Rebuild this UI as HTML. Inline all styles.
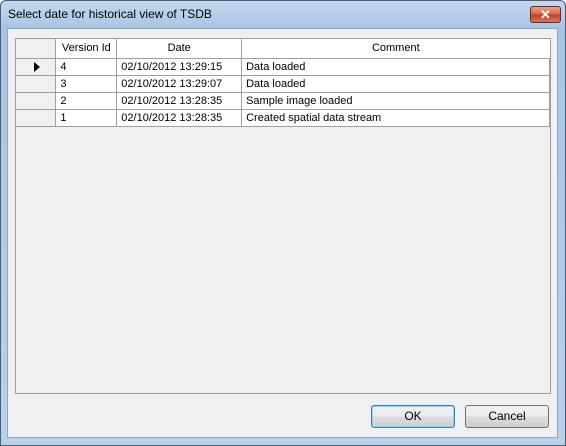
<!DOCTYPE html>
<html><head><style>
*{margin:0;padding:0;box-sizing:border-box}
body{width:566px;height:446px;overflow:hidden;font-family:"Liberation Sans",Tahoma,sans-serif;font-size:11px;background:#fff}
.win{position:absolute;left:0;top:0;width:566px;height:446px;border:1px solid #4a5d72;border-radius:6px 6px 0 0;background:linear-gradient(#c4d8ee,#a9c5e4 28px,#b9d1ea 100%)}
.title{position:absolute;left:7px;top:6px;font-size:12px;color:#000}
.close{position:absolute;left:529px;top:5px;width:31px;height:17px;border:1px solid #6b2a22;border-radius:3px;background:linear-gradient(#e8a493,#d06448 50%,#c0401f 51%,#d8785a);color:#fff;font-weight:bold;text-align:center;font-size:13px;line-height:15px}
.client{position:absolute;left:7px;top:28px;width:551px;height:410px;background:#f0f0f0;border:1px solid #8fa7c0}
.grid{position:absolute;left:15px;top:38px;width:536px;height:356px;border:1px solid #a0a0a0;background:#f0f0f0}
table{border-collapse:collapse;position:absolute;left:0;top:0}
td{height:17px;border:1px solid #a0a0a0;padding:0 4px;white-space:nowrap;background:#fff;color:#000}
tr.h td{height:19px;border-top:none;text-align:center}
td.rh{background:#f0f0f0;border-left:none}
.btn{position:absolute;top:405px;width:84px;height:23px;border:1px solid #707070;border-radius:3px;background:linear-gradient(#f2f2f2,#ebebeb 50%,#dddddd 51%,#cfcfcf);text-align:center;line-height:21px;font-size:12px}
</style></head><body>
<div class="win">
<div class="title">Select date for historical view of TSDB</div>
<div class="close">✕</div>
</div>
<div class="client"></div>
<div class="grid">
<table>
<tr class="h"><td class="rh" style="width:40px"></td><td style="width:61px">Version Id</td><td style="width:125px">Date</td><td style="width:310px;border-right:none">Comment</td></tr>
<tr><td class="rh"><span style="display:inline-block;margin-left:14px;width:0;height:0;border-left:6px solid #000;border-top:5px solid transparent;border-bottom:5px solid transparent;vertical-align:middle"></span></td><td>4</td><td>02/10/2012 13:29:15</td><td>Data loaded</td></tr>
<tr><td class="rh"></td><td>3</td><td>02/10/2012 13:29:07</td><td>Data loaded</td></tr>
<tr><td class="rh"></td><td>2</td><td>02/10/2012 13:28:35</td><td>Sample image loaded</td></tr>
<tr><td class="rh"></td><td>1</td><td>02/10/2012 13:28:35</td><td>Created spatial data stream</td></tr>
</table>
</div>
<div class="btn" style="left:371px;border-color:#3c7fb1;box-shadow:inset 0 0 0 1px #8fd2f5">OK</div>
<div class="btn" style="left:465px">Cancel</div>
</body></html>
